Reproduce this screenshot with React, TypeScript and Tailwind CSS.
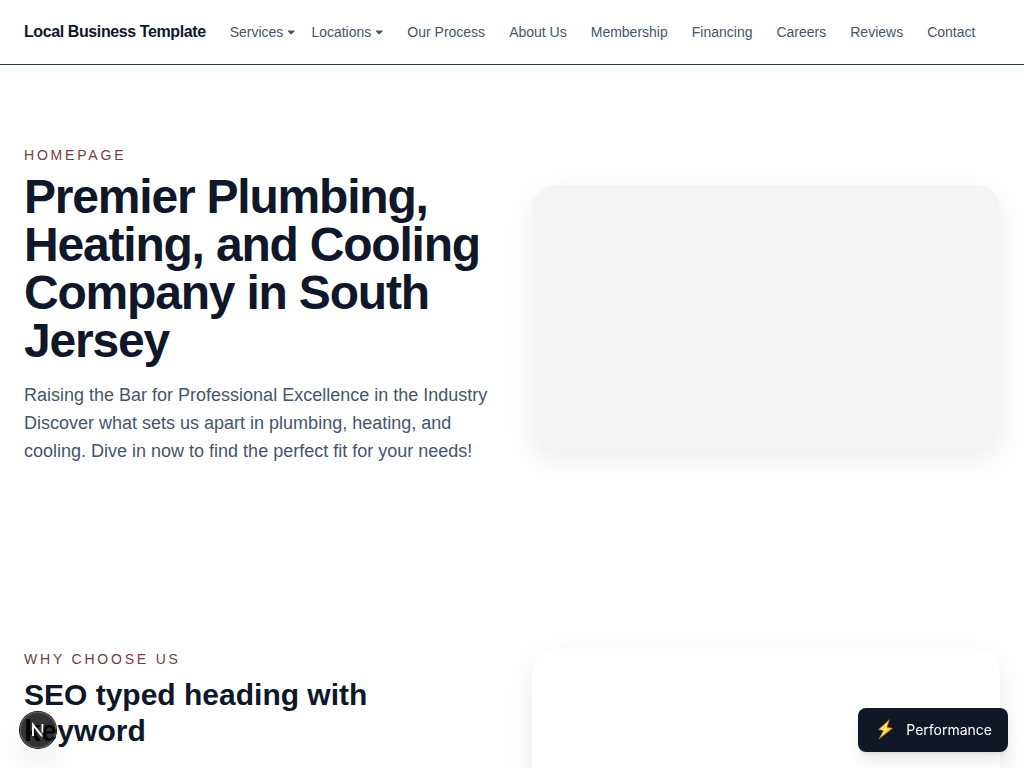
import React from "react";

const links = ["Our Process", "About Us", "Membership", "Financing", "Careers", "Reviews", "Contact"];
const menus = ["Services", "Locations"];

function Caret() {
  return (
    <svg aria-hidden="true" viewBox="0 0 8 5" className="h-[5px] w-2" fill="currentColor">
      <path d="M1.4.6h5.7c.5 0 .7.5.4.8L4.7 4.3a.6.6 0 0 1-.9 0L1 1.4C.7 1.100.9.6 1.400.6Z" />
    </svg>
  );
}

function Header() {
  return (
    <header className="border-b border-[#2f3e46] bg-white">
      <div className="flex h-16 items-center gap-6 px-6">
        <a href="#" className="whitespace-nowrap text-base font-semibold tracking-tight text-slate-900">
          Local Business Template
        </a>
        <nav className="flex items-center gap-6 whitespace-nowrap text-sm text-slate-600">
          <div className="flex gap-4">
            {menus.map((m) => (
              <button key={m} type="button" className="flex items-center gap-1">
                {m}
                <Caret />
              </button>
            ))}
          </div>
          {links.map((l) => (
            <a key={l} href="#">
              {l}
            </a>
          ))}
        </nav>
      </div>
    </header>
  );
}

function Eyebrow({ children }: { children: React.ReactNode }) {
  return <p className="text-sm uppercase tracking-[0.2em] text-[#7a3b3f]">{children}</p>;
}

export default function App() {
  return (
    <div className="min-h-screen bg-white font-['Liberation_Sans',Arial,sans-serif] text-slate-900 antialiased">
      <Header />
      <main>
        <section className="grid grid-cols-2 items-center gap-10 px-6 py-20">
          <div className="pb-6">
            <Eyebrow>Homepage</Eyebrow>
            <h1 className="mt-2 text-5xl font-semibold leading-none tracking-tight">
              Premier Plumbing, Heating, and Cooling Company in South Jersey
            </h1>
            <p className="mt-4 text-lg leading-7 text-slate-600">
              Raising the Bar for Professional Excellence in the Industry Discover what sets us apart in
              plumbing, heating, and cooling. Dive in now to find the perfect fit for your needs!
            </p>
          </div>
          <div className="aspect-video rounded-3xl bg-[#f4f4f4] shadow-[0_10px_30px_rgba(2,6,23,0.08)]" />
        </section>
        <section className="grid grid-cols-2 items-start gap-10 px-6 py-20">
          <div>
            <Eyebrow>Why choose us</Eyebrow>
            <h2 className="mt-2 text-3xl font-semibold leading-9">SEO typed heading with keyword</h2>
          </div>
          <div className="aspect-video rounded-3xl bg-white shadow-[0_10px_30px_rgba(2,6,23,0.08)]" />
        </section>
      </main>

      <button
        type="button"
        aria-label="Open developer tools"
        className="fixed bottom-5 left-5 flex size-9 items-center justify-center rounded-full bg-black/80 text-white shadow-[0_0_0_1px_#171717,inset_0_0_0_1px_rgba(255,255,255,0.14),0_16px_32px_-8px_rgba(0,0,0,0.24)]"
      >
        <svg aria-hidden="true" viewBox="0 0 40 40" className="size-10 shrink-0" fill="none">
          <defs>
            <linearGradient id="stem" x1="0" y1="14" x2="0" y2="25" gradientUnits="userSpaceOnUse">
              <stop stopColor="white" />
              <stop offset="0.6" stopColor="white" />
              <stop offset="1" stopColor="white" stopOpacity="0" />
            </linearGradient>
            <linearGradient id="slash" x1="15" y1="14" x2="26" y2="28" gradientUnits="userSpaceOnUse">
              <stop stopColor="white" />
              <stop offset="0.75" stopColor="white" />
              <stop offset="1" stopColor="white" stopOpacity="0" />
            </linearGradient>
          </defs>
          <path d="M15 26V14.800L24.800 27.200" stroke="url(#slash)" strokeWidth="1.9" />
          <path d="M24.400 14v11" stroke="url(#stem)" strokeWidth="1.8" />
        </svg>
      </button>

      <button
        type="button"
        className="fixed bottom-4 right-4 flex h-11 items-center gap-3 rounded-lg bg-gray-900 px-4 font-[Inter,sans-serif] text-sm text-white shadow-lg"
      >
        <svg aria-hidden="true" viewBox="0 0 20 24" className="h-6 w-5" fill="none">
          <defs>
            <linearGradient id="bolt" x1="4" y1="4" x2="17" y2="19" gradientUnits="userSpaceOnUse">
              <stop stopColor="#e59a12" />
              <stop offset="0.5" stopColor="#ffe45c" />
              <stop offset="1" stopColor="#e28a0c" />
            </linearGradient>
          </defs>
          <path d="M15.500 1.500 4.500 11.500l5 1L5 21 18.500 10.300l-5.500-1Z" fill="url(#bolt)" stroke="#b86f0a" strokeWidth="0.6" />
          <path d="M13.500 5 7.300 10.900l4.500 1-3 4.700" stroke="#fff3a0" strokeWidth="0.9" />
        </svg>
        Performance
      </button>
    </div>
  );
}
